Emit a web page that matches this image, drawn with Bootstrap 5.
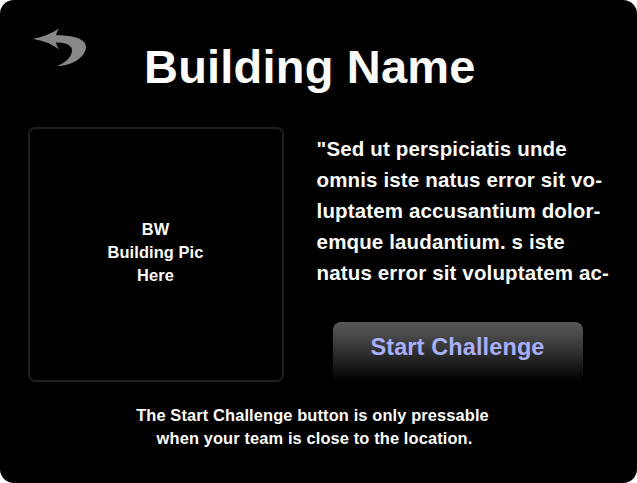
<!DOCTYPE html>
<html lang="en">
<head>
<meta charset="utf-8">
<meta name="viewport" content="width=device-width, initial-scale=1">
<title>Building Name</title>
<link href="https://cdn.jsdelivr.net/npm/bootstrap@5.3.0/dist/css/bootstrap.min.css" rel="stylesheet">
<style>
body{background:#fff;font-family:"Liberation Sans",Arial,sans-serif;font-weight:700;color:#fcfcfa}
.screen{width:637px;height:483px;background:#000;border-radius:14px}
.top-bar{height:127px;padding:28px 0 0 33px}
.back-link{width:54px;height:39px;line-height:0}
.title{font-size:47px;line-height:52px;letter-spacing:.2px;margin:13px 0 0 57px;font-weight:700}
.main-row{height:255px;padding-left:28px}
.photo{width:256px;height:255px;border:2px solid #1e1e1e;border-radius:7px;font-size:16.4px;line-height:23px;letter-spacing:.1px;padding:0 1px 4px 0}
.info{margin-left:32.6px;padding-top:6px}
.quote{font-size:20.5px;line-height:31px;letter-spacing:.14px}
.btn-start{--bs-btn-border-width:0;width:250px;height:62px;margin:34px 0 0 16.4px;padding:0 1px 10px 0;border-radius:8px;font-size:23.5px;font-weight:700;letter-spacing:.12px;background:linear-gradient(#585858,#484848 22%,#000 97%)}
.btn-start,.btn-start:hover{color:#aaaffc}
.note{font-size:16.4px;line-height:23px;letter-spacing:.13px;padding-top:22px;padding-right:12px}
</style>
</head>
<body>
<main class="screen overflow-hidden">
  <header class="top-bar d-flex align-items-start">
    <a class="back-link flex-shrink-0" href="#" aria-label="Back">
      <svg width="54" height="39" viewBox="0 0 54 39"><path fill="#888" d="M0 11Q15 8 26 .5Q23.500 4 23 7.200C41 7 53 11 53 19 53 28 40 38 24 38 34 34 39 28 39 22 39 17 32 14 23 14.5Q23.500 18 26 21.500Q15 13 0 11Z"/></svg>
    </a>
    <h1 class="title text-nowrap">Building Name</h1>
  </header>
  <section class="main-row d-flex">
    <div class="photo flex-shrink-0 d-flex align-items-center justify-content-center text-center"><span>BW<br>Building Pic<br>Here</span></div>
    <div class="info">
      <p class="quote text-nowrap mb-0">"Sed ut perspiciatis unde<br>omnis iste natus error sit vo-<br>luptatem accusantium dolor-<br>emque laudantium. s iste<br>natus error sit voluptatem ac-</p>
      <button type="button" class="btn btn-start">Start Challenge</button>
    </div>
  </section>
  <p class="note text-center mb-0">The Start Challenge button is only pressable<br><span class="ps-1">when your team is close to the location.</span></p>
</main>
<script src="https://cdn.jsdelivr.net/npm/bootstrap@5.3.0/dist/js/bootstrap.bundle.min.js"></script>
</body>
</html>
